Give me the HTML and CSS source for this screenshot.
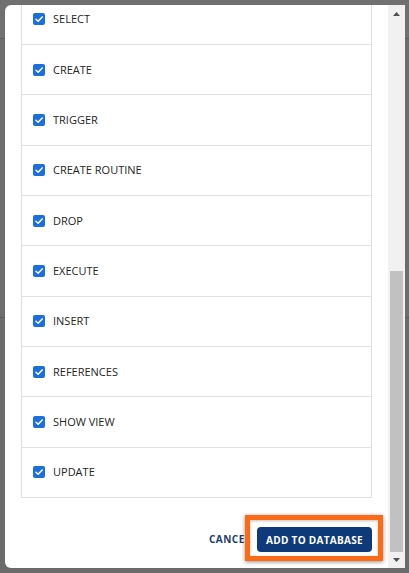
FILE: index.html
```html
<!DOCTYPE html>
<html lang="en">
<head>
<meta charset="utf-8">
<title>Add privileges</title>
<link rel="stylesheet" href="styles.css">
</head>
<body>
<div class="page">
  <header class="page-header"></header>
  <section class="page-section"></section>
</div>
<div class="backdrop"></div>
<div class="dialog">
  <div class="dialog-body">
    <ul class="priv-list">
      <li class="priv-row"><span class="checkbox"><svg viewBox="0 0 12 12" width="12" height="12"><path d="M3 6.3 L5.1 8.3 L9.2 3.9" fill="none" stroke="#fff" stroke-width="1.5" stroke-linecap="round" stroke-linejoin="round"/></svg></span><span class="priv-label">SELECT</span></li>
      <li class="priv-row"><span class="checkbox"><svg viewBox="0 0 12 12" width="12" height="12"><path d="M3 6.3 L5.1 8.3 L9.2 3.9" fill="none" stroke="#fff" stroke-width="1.5" stroke-linecap="round" stroke-linejoin="round"/></svg></span><span class="priv-label">CREATE</span></li>
      <li class="priv-row"><span class="checkbox"><svg viewBox="0 0 12 12" width="12" height="12"><path d="M3 6.3 L5.1 8.3 L9.2 3.9" fill="none" stroke="#fff" stroke-width="1.5" stroke-linecap="round" stroke-linejoin="round"/></svg></span><span class="priv-label">TRIGGER</span></li>
      <li class="priv-row"><span class="checkbox"><svg viewBox="0 0 12 12" width="12" height="12"><path d="M3 6.3 L5.1 8.3 L9.2 3.9" fill="none" stroke="#fff" stroke-width="1.5" stroke-linecap="round" stroke-linejoin="round"/></svg></span><span class="priv-label">CREATE ROUTINE</span></li>
      <li class="priv-row"><span class="checkbox"><svg viewBox="0 0 12 12" width="12" height="12"><path d="M3 6.3 L5.1 8.3 L9.2 3.9" fill="none" stroke="#fff" stroke-width="1.5" stroke-linecap="round" stroke-linejoin="round"/></svg></span><span class="priv-label">DROP</span></li>
      <li class="priv-row"><span class="checkbox"><svg viewBox="0 0 12 12" width="12" height="12"><path d="M3 6.3 L5.1 8.3 L9.2 3.9" fill="none" stroke="#fff" stroke-width="1.5" stroke-linecap="round" stroke-linejoin="round"/></svg></span><span class="priv-label">EXECUTE</span></li>
      <li class="priv-row"><span class="checkbox"><svg viewBox="0 0 12 12" width="12" height="12"><path d="M3 6.3 L5.1 8.3 L9.2 3.9" fill="none" stroke="#fff" stroke-width="1.5" stroke-linecap="round" stroke-linejoin="round"/></svg></span><span class="priv-label">INSERT</span></li>
      <li class="priv-row"><span class="checkbox"><svg viewBox="0 0 12 12" width="12" height="12"><path d="M3 6.3 L5.1 8.3 L9.2 3.9" fill="none" stroke="#fff" stroke-width="1.5" stroke-linecap="round" stroke-linejoin="round"/></svg></span><span class="priv-label">REFERENCES</span></li>
      <li class="priv-row"><span class="checkbox"><svg viewBox="0 0 12 12" width="12" height="12"><path d="M3 6.3 L5.1 8.3 L9.2 3.9" fill="none" stroke="#fff" stroke-width="1.5" stroke-linecap="round" stroke-linejoin="round"/></svg></span><span class="priv-label">SHOW VIEW</span></li>
      <li class="priv-row"><span class="checkbox"><svg viewBox="0 0 12 12" width="12" height="12"><path d="M3 6.3 L5.1 8.3 L9.2 3.9" fill="none" stroke="#fff" stroke-width="1.5" stroke-linecap="round" stroke-linejoin="round"/></svg></span><span class="priv-label">UPDATE</span></li>
    </ul>
    <div class="dialog-footer">
      <button class="btn-cancel" type="button">CANCEL</button>
      <span class="primary-wrap">
        <button class="btn-primary" type="button">ADD TO DATABASE</button>
        <span class="highlight"></span>
      </span>
    </div>
  </div>
  <div class="scrollbar">
    <div class="sb-btn sb-up"><svg viewBox="0 0 7 4" width="7" height="4"><polygon points="0,4 3.5,0 7,4" fill="#505050"/></svg></div>
    <div class="sb-track"><div class="sb-thumb"></div></div>
    <div class="sb-btn sb-down"><svg viewBox="0 0 7 4" width="7" height="4"><polygon points="0,0 7,0 3.5,4" fill="#505050"/></svg></div>
  </div>
</div>
</body>
</html>
```
FILE: styles.css
```css
html, body {
  margin: 0;
  padding: 0;
  height: 100%;
}

body {
  font-family: "Open Sans", "Noto Sans", Arial, sans-serif;
  background: #f3f3f3;
  overflow: hidden;
}

.page {
  display: flex;
  flex-direction: column;
  height: 100%;
}

.page-header {
  height: 38px;
  background: #ffffff;
  border-bottom: 1px solid #d6d6d6;
  flex-shrink: 0;
}

.page-section {
  height: 278px;
  border-bottom: 1px solid #d0d0d0;
  background: #f7f7f7;
  flex-shrink: 0;
}

.backdrop {
  position: fixed;
  inset: 0;
  background: rgba(0, 0, 0, 0.56);
}

.dialog {
  position: fixed;
  left: 5px;
  top: 5px;
  width: 400px;
  height: 563px;
  background: #ffffff;
  border-radius: 6px 0 0 6px;
  overflow: hidden;
  display: flex;
}

.dialog-body {
  flex: 1;
  min-width: 0;
  display: flex;
  flex-direction: column;
  justify-content: flex-end;
  overflow: hidden;
  padding: 0 16px 16px 16px;
}

.priv-list {
  list-style: none;
  margin: 0;
  padding: 0;
  border: 1px solid #e0e0e0;
  flex-shrink: 0;
}

.priv-row {
  box-sizing: border-box;
  height: 50.33px;
  display: flex;
  align-items: center;
  padding-left: 11px;
  border-top: 1px solid #e0e0e0;
}

.priv-row:first-child {
  border-top: none;
  height: 49.33px;
}

.checkbox {
  width: 12px;
  height: 12px;
  border-radius: 2px;
  background: #1b6fdc;
  display: flex;
  align-items: center;
  justify-content: center;
  flex-shrink: 0;
}

.checkbox svg {
  display: block;
}

.priv-label {
  margin-left: 8px;
  font-size: 11px;
  color: #252525;
  line-height: 16px;
}

.dialog-footer {
  flex-shrink: 0;
  margin-top: 29px;
  height: 25px;
  display: flex;
  justify-content: flex-end;
  align-items: center;
}

.btn-cancel {
  background: none;
  border: none;
  padding: 0 6px 0 0;
  margin: 0;
  font-family: "Open Sans", "Noto Sans", Arial, sans-serif;
  font-weight: 700;
  font-size: 10px;
  letter-spacing: 0.5px;
  color: #1e3d6c;
  line-height: 25px;
}

.primary-wrap {
  position: relative;
  display: flex;
}

.btn-primary {
  height: 25px;
  width: 115px;
  padding: 0;
  border: none;
  border-radius: 4px;
  background: #0e3a79;
  color: #ffffff;
  font-family: "Open Sans", "Noto Sans", Arial, sans-serif;
  font-weight: 700;
  font-size: 10px;
  letter-spacing: 0.3px;
}

.highlight {
  position: absolute;
  left: -12px;
  top: -12px;
  right: -11px;
  bottom: -9px;
  border: 5px solid #fd6a16;
  box-shadow: 0 1px 4px rgba(0, 0, 0, 0.45), inset 0 1px 3px rgba(0, 0, 0, 0.25);
  pointer-events: none;
}

.scrollbar {
  width: 17px;
  flex-shrink: 0;
  background: #f1f1f1;
  display: flex;
  flex-direction: column;
}

.sb-btn {
  display: flex;
  align-items: center;
  justify-content: center;
  flex-shrink: 0;
}

.sb-up {
  height: 17px;
}

.sb-down {
  height: 16px;
}

.sb-btn svg {
  display: block;
}

.sb-track {
  flex: 1;
  display: flex;
  flex-direction: column;
  justify-content: flex-end;
}

.sb-thumb {
  height: 281px;
  margin: 0 2px;
  background: #c1c1c1;
}
```
